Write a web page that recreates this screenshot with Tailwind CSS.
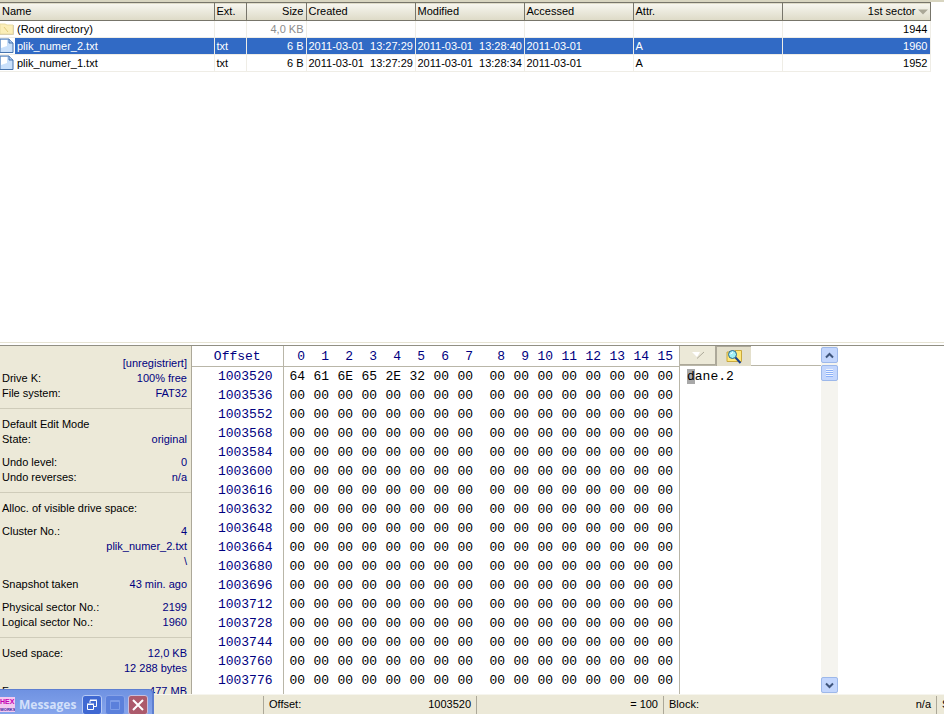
<!DOCTYPE html>
<html lang="en">
<head>
  <meta charset="UTF-8" />
  <meta name="viewport" content="width=device-width, initial-scale=1.0"/>
  <title>Drive K:</title>
  <script src="https://cdn.jsdelivr.net/npm/@tailwindcss/browser@4"></script>
</head>
<body class="relative flex h-screen flex-col overflow-hidden bg-white font-['Liberation_Sans',Arial,sans-serif] text-[11px] leading-[15px] text-black">

  <!-- Directory browser -->
  <main class="min-h-0 flex-1 overflow-hidden border-t-2 border-[#d8d5c0]">
    <table class="w-[930px] table-fixed border-collapse whitespace-nowrap">
      <colgroup>
        <col class="w-[214px]"><col class="w-8"><col class="w-[60px]"><col class="w-[109px]"><col class="w-[109px]"><col class="w-[109px]"><col class="w-[149px]"><col class="w-[148px]">
      </colgroup>
      <thead>
        <tr class="h-[18px] border-t border-b border-[#77756a] bg-linear-to-b from-[#f7f6ef] to-[#dedbc8] text-left *:border-r *:border-[#77756a] *:p-0 *:px-[2px] *:font-normal">
          <th>Name</th>
          <th>Ext.</th>
          <th class="text-right">Size</th>
          <th>Created</th>
          <th>Modified</th>
          <th>Accessed</th>
          <th>Attr.</th>
          <th>
            <span class="flex items-center justify-end gap-[2px]">1st sector
              <svg class="h-[6px] w-[10px]" viewBox="0 0 10 6"><path d="M0 0.5H10L5 5.5Z" fill="#aaa797"/></svg>
            </span>
          </th>
        </tr>
      </thead>
      <tbody>
        <tr class="h-[17px] border-b border-[#efede6] *:border-r *:border-[#efede6] *:p-0 *:px-[2px]">
          <td>
            <span class="flex h-4 items-center gap-[2px]">
              <svg class="-ml-[2px] h-[14px] w-[15px]" viewBox="0 0 15 14"><path d="M0 2H5L7 3H13V12H0Z" fill="#fbeeb8" stroke="#eadca0"/><path d="M4 5L8 10" stroke="#e2cc7c"/><path d="M13.500 3V12.500H0" fill="none" stroke="#d9cfae"/></svg>
              <span>(Root directory)</span>
            </span>
          </td>
          <td></td>
          <td class="text-right text-[#8c8c8c]">4,0 KB</td>
          <td></td>
          <td></td>
          <td></td>
          <td></td>
          <td class="text-right">1944</td>
        </tr>
        <tr class="h-[17px] border-b border-[#efede6] bg-[#316ac5] text-white *:border-r *:border-[#efede6] *:p-0 *:px-[2px]">
          <td class="bg-linear-to-r from-white from-[15px] to-[#316ac5] to-[15px]">
            <span class="flex h-4 items-center gap-[2px]">
              <svg class="-ml-[2px] h-4 w-[15px]" viewBox="0 0 15 16"><path d="M0 1H9L13 5V14.500H0Z" fill="#c9e0fb" stroke="#4673ad"/><path d="M1 2H7V8L1 10Z" fill="#fff"/><path d="M9 1V5H13" fill="#a9c8ef" stroke="#4673ad"/></svg>
              <span>plik_numer_2.txt</span>
            </span>
          </td>
          <td>txt</td>
          <td class="text-right">6 B</td>
          <td>2011-03-01&nbsp; 13:27:29</td>
          <td>2011-03-01&nbsp; 13:28:40</td>
          <td>2011-03-01</td>
          <td>A</td>
          <td class="text-right">1960</td>
        </tr>
        <tr class="h-[17px] border-b border-[#efede6] *:border-r *:border-[#efede6] *:p-0 *:px-[2px]">
          <td>
            <span class="flex h-4 items-center gap-[2px]">
              <svg class="-ml-[2px] h-4 w-[15px]" viewBox="0 0 15 16"><path d="M0 1H9L13 5V14.500H0Z" fill="#c9e0fb" stroke="#4673ad"/><path d="M1 2H7V8L1 10Z" fill="#fff"/><path d="M9 1V5H13" fill="#a9c8ef" stroke="#4673ad"/></svg>
              <span>plik_numer_1.txt</span>
            </span>
          </td>
          <td>txt</td>
          <td class="text-right">6 B</td>
          <td>2011-03-01&nbsp; 13:27:29</td>
          <td>2011-03-01&nbsp; 13:28:34</td>
          <td>2011-03-01</td>
          <td>A</td>
          <td class="text-right">1952</td>
        </tr>
      </tbody>
    </table>
  </main>

  <!-- Splitter -->
  <div class="h-1 shrink-0 border-t border-b border-t-[#e6e3d3] border-b-[#918f83]"></div>

  <section class="flex shrink-0">
    <!-- Info panel -->
    <aside class="w-[192px] shrink-0 overflow-hidden border-r border-[#aca899] bg-[#ece9d8] pt-[10px] contain-size">
      <dl class="flex flex-col *:flex *:justify-between *:pr-1 *:pl-[2px] [&_dd]:ml-auto [&_dd]:text-[#000080]">
        <div><dd>[unregistriert]</dd></div>
        <div><dt>Drive K:</dt><dd>100% free</dd></div>
        <div><dt>File system:</dt><dd>FAT32</dd></div>
        <div class="mt-[7px] border-t border-[#cfccba] pt-2"><dt>Default Edit Mode</dt></div>
        <div><dt>State:</dt><dd>original</dd></div>
        <div class="mt-2"><dt>Undo level:</dt><dd>0</dd></div>
        <div><dt>Undo reverses:</dt><dd>n/a</dd></div>
        <div class="mt-[7px] border-t border-[#cfccba] pt-2"><dt>Alloc. of visible drive space:</dt></div>
        <div class="mt-2"><dt>Cluster No.:</dt><dd>4</dd></div>
        <div><dd>plik_numer_2.txt</dd></div>
        <div><dd>\</dd></div>
        <div class="mt-2"><dt>Snapshot taken</dt><dd>43 min. ago</dd></div>
        <div class="mt-2"><dt>Physical sector No.:</dt><dd>2199</dd></div>
        <div><dt>Logical sector No.:</dt><dd>1960</dd></div>
        <div class="mt-[7px] border-t border-[#cfccba] pt-2"><dt>Used space:</dt><dd>12,0 KB</dd></div>
        <div><dd>12 288 bytes</dd></div>
        <div class="mt-2"><dt>Free space:</dt><dd>477 MB</dd></div>
      </dl>
    </aside>

    <!-- Hex editor -->
    <div class="shrink-0 border-r border-[#b9b6a8] font-['Liberation_Mono','Courier_New',monospace] text-[13px]">
      <table class="h-full w-[487px] table-fixed border-collapse text-right">
        <colgroup>
          <col class="w-[91px]"><col class="w-[22px]"><col class="w-6"><col class="w-6"><col class="w-6"><col class="w-6"><col class="w-6"><col class="w-6"><col class="w-6"><col class="w-8"><col class="w-6"><col class="w-6"><col class="w-6"><col class="w-6"><col class="w-6"><col class="w-6"><col class="w-6"><col>
        </colgroup>
        <thead id="hexHead" class="text-[#000080]"></thead>
        <tbody id="hexBody"></tbody>
      </table>
    </div>

    <!-- Text column -->
    <div class="w-[141px] shrink-0">
      <div class="flex h-5 border-b border-[#b9b6a8]">
        <button aria-label="Apply" class="flex w-9 items-center justify-center border-r border-b border-[#aca899] bg-[#ece9d8]">
          <svg class="h-2 w-[14px]" viewBox="0 0 14 8" fill="none"><path d="M1 1H9L6 6Z" fill="#fff"/><path d="M6 7.500L13 1" stroke="#aca899"/></svg>
        </button>
        <button aria-label="Preview" class="flex h-5 w-[35px] items-center justify-center border-t border-l border-[#aca899] bg-[#e4e0cc]">
          <svg class="h-[15px] w-[17px]" viewBox="0 0 17 15"><path d="M1 3H8L9 1.500H15.500V12.500H1Z" fill="#ffe97a" stroke="#c9a83c"/><circle cx="6.500" cy="5.500" r="4" fill="#9ff0f5" stroke="#27638a"/><path d="M4.500 5L7 3.500" stroke="#fff"/><path d="M9.500 8.500L14.500 14" stroke="#173f8c" stroke-width="2"/></svg>
        </button>
      </div>
      <p class="px-[7px] pt-[3px] font-['Liberation_Mono','Courier_New',monospace] text-[13px]"><span class="bg-[#a8a8a8]">d</span>ane.2</p>
    </div>

    <!-- Scroll bar -->
    <div class="flex w-[17px] shrink-0 flex-col gap-[2px] bg-[#f5f4ef] py-px">
      <button aria-label="Scroll up" class="flex h-4 items-center justify-center rounded-[2px] border border-[#9db8ea] bg-[#c3d6fd]">
        <svg class="h-[7px] w-[9px]" viewBox="0 0 9 7"><path d="M1 5.500L4.500 2L8 5.500" fill="none" stroke="#3f557c" stroke-width="2"/></svg>
      </button>
      <div class="flex h-4 items-center justify-center rounded-[2px] border border-[#9db8ea] bg-[#c3d6fd]">
        <svg class="h-2 w-[7px]" viewBox="0 0 7 8"><path d="M0 .5H7M0 2.500H7M0 4.500H7M0 6.500H7" stroke="#eef4fe"/><path d="M0 1.500H7M0 3.500H7M0 5.500H7M0 7.500H7" stroke="#8cb0f8"/></svg>
      </div>
      <button aria-label="Scroll down" class="mt-auto flex h-4 items-center justify-center rounded-[2px] border border-[#9db8ea] bg-[#c3d6fd]">
        <svg class="h-[7px] w-[9px]" viewBox="0 0 9 7"><path d="M1 1.500L4.500 5L8 1.500" fill="none" stroke="#3f557c" stroke-width="2"/></svg>
      </button>
    </div>
  </section>

  <!-- Status bar -->
  <footer class="flex h-5 shrink-0 items-center whitespace-nowrap border-t border-[#f6f5ee] bg-[#ece9d8] *:flex *:h-[18px] *:shrink-0 *:items-center *:justify-between *:border-r *:border-[#aca899] *:px-[5px]">
    <div class="w-[264px]"></div>
    <div class="w-[213px]"><span>Offset:</span><span>1003520</span></div>
    <div class="w-[187px]"><span class="ml-auto">= 100</span></div>
    <div class="w-[273px]"><span>Block:</span><span>n/a</span></div>
    <div>Size:</div>
  </footer>

  <!-- Minimised Messages window -->
  <div class="absolute bottom-0 left-0 flex h-[25px] w-[154px] items-center gap-1 overflow-hidden rounded-tr-[5px] border-t border-r-2 border-[#5e7fd0] bg-linear-to-b from-[#6f92e2] to-[#86a5ec] pt-[5px]">
    <svg class="h-[15px] w-[15px] shrink-0" viewBox="0 0 15 15">
      <rect width="15" height="15" fill="#f3c9f0"/>
      <text x="0" y="7" font-size="7" font-weight="bold" font-family="Liberation Sans" fill="#c400b0">HEX</text>
      <text x="0" y="14" font-size="4" font-weight="bold" font-family="Liberation Sans" fill="#3a1a9c">WORKS</text>
    </svg>
    <span class="font-['Open_Sans',sans-serif] text-[12px] font-bold text-[#d3e0fa]">Messages</span>
    <div class="ml-auto flex gap-[3px] pr-1">
      <button aria-label="Restore" class="flex size-5 items-center justify-center rounded-[3px] border border-[#b8cbf5] bg-[#3f68d2]">
        <svg class="size-3" viewBox="0 0 12 12" fill="none" stroke="#fff"><path d="M4 4V1.500H10.500V7.500H8M4 1H11" /><path d="M1.500 5.500H7.500V10.500H1.500ZM1 5H8"/></svg>
      </button>
      <button aria-label="Maximise" disabled class="flex size-5 items-center justify-center rounded-[3px] border border-[#86a2e8] bg-[#5b80db]">
        <svg class="size-3" viewBox="0 0 12 12" fill="none" stroke="#7d9de8"><path d="M1.500 1.500H10.500V10.500H1.500ZM1 2.500H11"/></svg>
      </button>
      <button aria-label="Close" class="flex size-5 items-center justify-center rounded-[3px] border border-[#c9bfdc] bg-[#ac5a6c]">
        <svg class="size-3" viewBox="0 0 12 12"><path d="M1 1L11 11M11 1L1 11" stroke="#fff" stroke-width="2"/></svg>
      </button>
    </div>
  </div>

  <script>
    const bytes = ["64", "61", "6E", "65", "2E", "32"];
    const cols = [...Array(16).keys()];

    document.getElementById("hexHead").innerHTML = `
      <tr class="h-5 border-b border-[#b9b6a8]">
        <th class="border-r border-[#b9b6a8] p-0 pt-[2px] text-center font-normal">Offset</th>
        ${cols.map(c => `<th class="p-0 pt-[2px] font-normal">${c}</th>`).join("")}
        <th class="p-0"></th>
      </tr>`;

    let rows = "";
    for (let r = 0; r < 17; r++) {
      rows += `<tr class="h-[19px]">
        <th class="border-r border-[#b9b6a8] p-0 pt-[2px] pr-[10px] font-normal text-[#000080]">${1003520 + r * 16}</th>
        ${cols.map(c => `<td class="p-0 pt-[2px]">${bytes[r * 16 + c] || "00"}</td>`).join("")}
        <td class="p-0"></td>
      </tr>`;
    }
    // space under the last row
    rows += `<tr class="h-[5px]"><td class="border-r border-[#b9b6a8] p-0"></td><td colspan="17" class="p-0"></td></tr>`;
    document.getElementById("hexBody").innerHTML = rows;
  </script>
</body>
</html>
